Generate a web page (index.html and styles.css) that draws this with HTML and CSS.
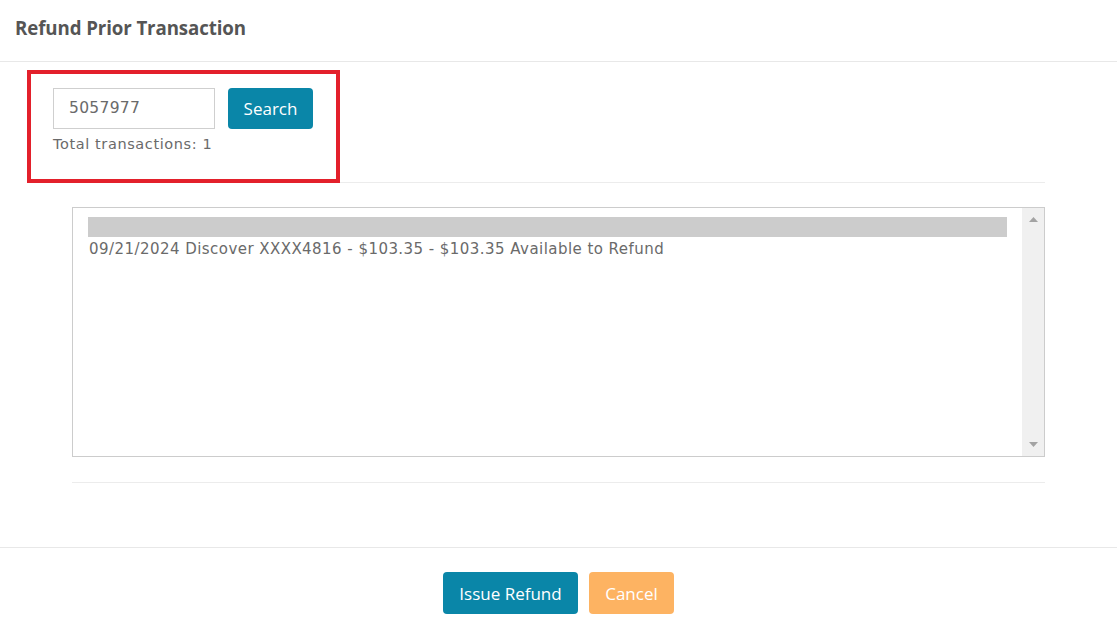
FILE: index.html
```html
<!DOCTYPE html>
<html>
<head>
<meta charset="utf-8">
<link rel="stylesheet" href="styles.css">
</head>
<body>
<div class="modal">
  <div class="header"><h1 class="title">Refund Prior Transaction</h1></div>
  <div class="body">
    <div class="search-area">
      <div class="search-row">
        <div class="input">5057977</div>
        <button class="btn btn-primary btn-search">Search</button>
      </div>
      <div class="total">Total transactions: 1</div>
      <div class="highlight-box"></div>
    </div>
    <div class="content">
      <div class="sep"></div>
      <div class="listbox">
        <div class="list-items">
          <div class="item selected"></div>
          <div class="item">09/21/2024 Discover XXXX4816 - $103.35 - $103.35 Available to Refund</div>
        </div>
        <div class="scrollbar">
          <svg class="arrow" width="9" height="5" viewBox="0 0 9 5"><path d="M0 5 L4.5 0 L9 5 Z" fill="#a3a3a3"/></svg>
          <svg class="arrow" width="9" height="5" viewBox="0 0 9 5"><path d="M0 0 L4.5 5 L9 0 Z" fill="#a3a3a3"/></svg>
        </div>
      </div>
      <div class="sep sep-bottom"></div>
    </div>
  </div>
  <div class="footer">
    <button class="btn btn-primary btn-issue">Issue Refund</button>
    <button class="btn btn-cancel">Cancel</button>
  </div>
</div>
</body>
</html>
```
FILE: styles.css
```css
* { box-sizing: border-box; }
html, body { margin: 0; padding: 0; background: #fff; }
body { font-family: "DejaVu Sans", "Open Sans", sans-serif; color: #666; width: 1117px; height: 638px; overflow: hidden; }
.modal { display: flex; flex-direction: column; height: 638px; }
.header { height: 62px; border-bottom: 1px solid #e8e8e8; padding-left: 15px; display: flex; align-items: center; padding-bottom: 6px; }
.title { margin: 0; font-family: "Open Sans", sans-serif; font-size: 18.7px; font-weight: 700; color: #555; letter-spacing: -0.1px; }
.body { height: 486px; border-bottom: 1px solid #e8e8e8; }
.search-area { position: relative; padding: 26px 0 0 53px; height: 120px; }
.search-row { display: flex; gap: 13px; align-items: center; }
.input { width: 162px; height: 41px; border: 1px solid #cfcfcf; padding-left: 15px; line-height: 39px; font-size: 15.5px; letter-spacing: 0.3px; color: #6a6a6a; }
.btn { font-family: "Open Sans", sans-serif; border: none; border-radius: 4px; color: #fff; font-size: 17px; height: 41px; padding: 0; cursor: pointer; }
.btn-primary { background: #0a86a8; }
.btn-search { width: 85px; }
.total { font-size: 14.5px; letter-spacing: 0.6px; color: #6a6a6a; margin-top: 4px; line-height: 22px; }
.highlight-box { position: absolute; left: 27px; top: 8px; width: 313px; height: 113px; border: 4px solid #e3202b; }
.content { padding: 0 72px; }
.sep { height: 1px; background: #ececec; }
.listbox { margin-top: 24px; height: 250px; border: 1px solid #cccccc; display: flex; }
.list-items { flex: 1; padding: 9px 15px 0 15px; }
.item { font-size: 15px; letter-spacing: 0.45px; color: #6a6a6a; line-height: 25px; padding-left: 1px; white-space: nowrap; }
.item.selected { background: #cccccc; height: 20px; margin-bottom: 0; }
.scrollbar { width: 22px; background: #f0f0f0; display: flex; flex-direction: column; justify-content: space-between; align-items: center; padding: 9px 0 9px; }
.arrow { display: block; }
.sep-bottom { margin-top: 25px; }
.footer { flex: 1; display: flex; justify-content: center; align-items: flex-start; gap: 11px; padding-top: 24px; }
.btn-issue { width: 135px; height: 42px; }
.btn-cancel { width: 85px; height: 42px; background: #fdb362; }
```
